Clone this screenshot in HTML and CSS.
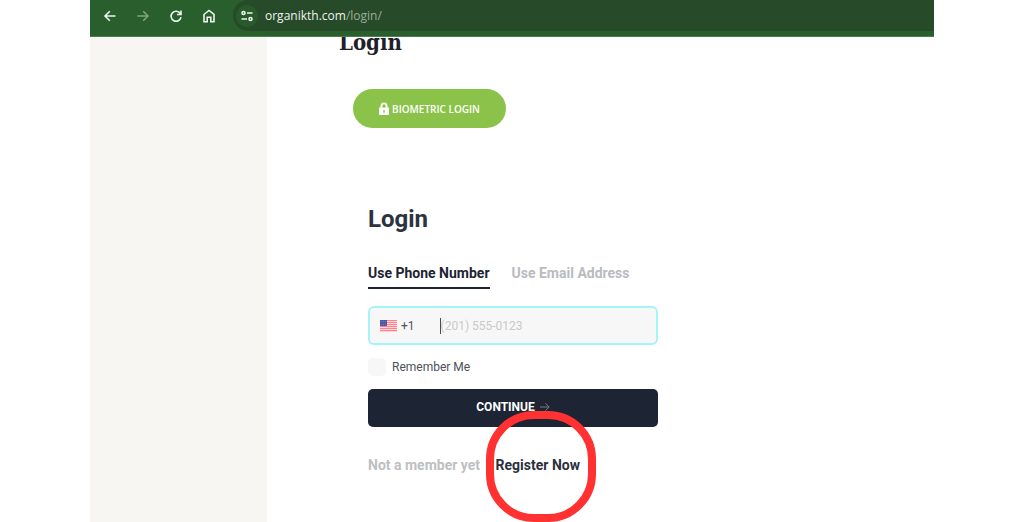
FILE: index.html
```html
<!DOCTYPE html>
<html lang="en">
<head>
<meta charset="utf-8">
<meta name="viewport" content="width=device-width, initial-scale=1">
<title>Login</title>
<link rel="stylesheet" href="styles.css">
</head>
<body>
<div class="window">
  <header class="toolbar">
    <nav class="nav">
      <button class="nav-btn" type="button" aria-label="Back"><svg viewBox="0 0 14 14"><path d="M12.5 7H2M6.8 2.2 2 7l4.800 4.800"/></svg></button>
      <button class="nav-btn nav-btn-off" type="button" aria-label="Forward"><svg viewBox="0 0 14 14"><path d="M1.500 7H12M7.200 2.200 12 7l-4.800 4.800"/></svg></button>
      <button class="nav-btn" type="button" aria-label="Reload"><svg viewBox="0 0 14 14"><path d="M11.300 4.500A5 5 0 1 0 12 8.200M12 1.500V5.500H8"/></svg></button>
      <button class="nav-btn" type="button" aria-label="Home"><svg viewBox="0 0 14 14"><path d="M2 5.500 7 1.500l5 4V12.700H8.800V8.200H5.200v4.500H2z"/></svg></button>
    </nav>
    <div class="address">
      <span class="site"><svg viewBox="0 0 14 14"><circle cx="3.500" cy="4" r="1.500"/><path d="M7 4h5.500M1.500 10H7"/><circle cx="10.500" cy="10" r="1.500"/></svg></span>
      <span class="url">organikth.com<span class="url-path">/login/</span></span>
    </div>
  </header>
  <div class="page">
    <aside class="side"></aside>
    <main class="content">
      <h1 class="page-title">Login</h1>
      <button class="biometric" type="button"><svg class="lock" viewBox="0 0 10 13"><path fill="#fff" fill-rule="evenodd" d="M1.500 5.500V4a3.500 3.500 0 0 1 7 0v1.500H9q1 0 1 1V12q0 1-1 1H1q-1 0-1-1V6.500q0-1 1-1zM3.300 5.500h3.400V4a1.700 1.700 0 0 0-3.400 0zM4.300 8v2.800h1.400V8z"/></svg>BIOMETRIC LOGIN</button>
      <form class="login">
        <h2 class="form-title">Login</h2>
        <div class="tabs">
          <button class="tab tab-on" type="button">Use Phone Number</button>
          <button class="tab" type="button">Use Email Address</button>
        </div>
        <div class="phone">
          <svg class="flag" viewBox="0 0 17 12"><path fill="#ffd9dc" d="M0 0h17v12H0z"/><path stroke="#ff8088" stroke-width="1" d="M0 .5h17M0 2.500h17M0 4.500h17M0 6.500h17M0 8.500h17M0 10.500h17"/><path fill="#5058a5" d="M0 0h7v6H0z"/><path stroke="#7078b8" stroke-dasharray="1 1" d="M1 1.500h5M1 4.500h5"/></svg>
          <span class="code">+1</span>
          <input class="number" type="tel" placeholder="(201) 555-0123" aria-label="Phone number">
        </div>
        <label class="remember"><input class="tick" type="checkbox">Remember Me</label>
        <button class="continue" type="button">CONTINUE<svg class="arrow" viewBox="0 0 10 10"><path d="M0 5h9M5.500 1.300 9.200 5 5.500 8.700"/></svg></button>
        <p class="join">Not a member yet <a class="register" href="#">Register Now<span class="ring"></span></a></p>
      </form>
    </main>
  </div>
</div>
</body>
</html>
```
FILE: styles.css
```css
* { box-sizing: border-box; }
body {
  margin: 0;
  background: #fff;
  font-family: Roboto, "Liberation Sans", sans-serif;
  overflow: hidden;
}
button { border: 0; padding: 0; background: none; font: inherit; }
.window {
  display: flex;
  flex-direction: column;
  height: 100vh;
  margin: 0 90px;
}
.toolbar {
  display: flex;
  flex: none;
  gap: 16px;
  height: 37px;
  padding-left: 12px;
  background: #285f2c;
  border-bottom: 1px solid #4c7c50;
}
.nav { display: flex; align-items: center; gap: 17px; padding-bottom: 5px; }
.nav-btn { display: flex; width: 16px; height: 16px; align-items: center; justify-content: center; }
.nav-btn svg, .site svg {
  width: 14px;
  height: 14px;
  fill: none;
  stroke: #eef5ee;
  stroke-width: 1.6;
}
.nav-btn-off { opacity: 0.45; }
.address {
  display: flex;
  flex: 1;
  align-items: center;
  gap: 7px;
  height: 31px;
  padding-left: 3px;
  background: #274a29;
  border-radius: 16px 0 0 16px;
}
.site {
  display: flex;
  align-items: center;
  justify-content: center;
  width: 22px;
  height: 22px;
  border-radius: 50%;
  background: #285a2c;
}
.url { font: 12px/18px "Open Sans", sans-serif; color: #eef3ee; }
.url-path { color: #9aaf9b; }
.page { display: flex; flex: 1; min-height: 0; overflow: hidden; }
.side { width: 177px; background: #f7f6f2; }
.content { flex: 1; padding-left: 72px; }
.page-title {
  margin: -10px 0 32px;
  font: bold 22px/30px "DejaVu Serif Condensed", "DejaVu Serif", serif;
  color: #1d2029;
}
.biometric {
  display: flex;
  align-items: center;
  justify-content: center;
  gap: 3px;
  width: 153px;
  height: 39px;
  margin-left: 14px;
  border-radius: 20px;
  background: #8bc34a;
  color: #fff;
  font: 600 10px/16px "Open Sans", sans-serif;
}
.lock { width: 10px; height: 13px; }
.login { width: 290px; margin: 75px 0 0 29px; }
.form-title { margin: 0 0 28px; font-size: 24px; line-height: 32px; color: #2b333e; }
.tabs { display: flex; gap: 22px; margin-bottom: 17px; }
.tab {
  padding-bottom: 4px;
  border-bottom: 2px solid transparent;
  font-size: 14px;
  font-weight: 700;
  line-height: 20px;
  color: #b9bbc0;
}
.tab-on { border-color: #1d2433; color: #1d2433; }
.phone {
  display: flex;
  align-items: center;
  height: 39px;
  padding: 0 10px;
  border: 2px solid #a4f4fb;
  border-radius: 6px;
  background: #f7f7f7;
}
.flag { width: 17px; height: 12px; }
.code { margin: 0 25px 0 4px; font-size: 12px; color: #50545d; }
.number {
  flex: 1;
  min-width: 0;
  height: 16px;
  padding: 0;
  border: 0;
  border-left: 1px solid #444852;
  outline: 0;
  background: none;
  font: 12px/16px Roboto, sans-serif;
}
.number::placeholder { color: #c9c9c9; }
.remember {
  display: flex;
  align-items: center;
  gap: 6px;
  margin: 12px 0;
  font-size: 12px;
  line-height: 20px;
  color: #4c505a;
}
.tick {
  appearance: none;
  width: 18px;
  height: 18px;
  margin: 0;
  border-radius: 5px;
  background: #f7f7f7;
}
.continue {
  display: flex;
  align-items: center;
  justify-content: center;
  gap: 5px;
  width: 100%;
  height: 38px;
  padding-bottom: 2px;
  border-radius: 5px;
  background: #1d2433;
  color: #fff;
  font-size: 12px;
  font-weight: 700;
}
.arrow { width: 10px; height: 10px; fill: none; stroke: #777d89; }
.join { margin: 28px 0 0; font-size: 14px; line-height: 20px; font-weight: 700; color: #bdbfc3; }
.register { position: relative; margin-left: 12px; color: #2b313d; text-decoration: none; }
.ring {
  position: absolute;
  top: -46px;
  left: -10px;
  width: 110px;
  height: 111px;
  border: 8px solid #ff3131;
  border-radius: 48px;
  pointer-events: none;
}
```
